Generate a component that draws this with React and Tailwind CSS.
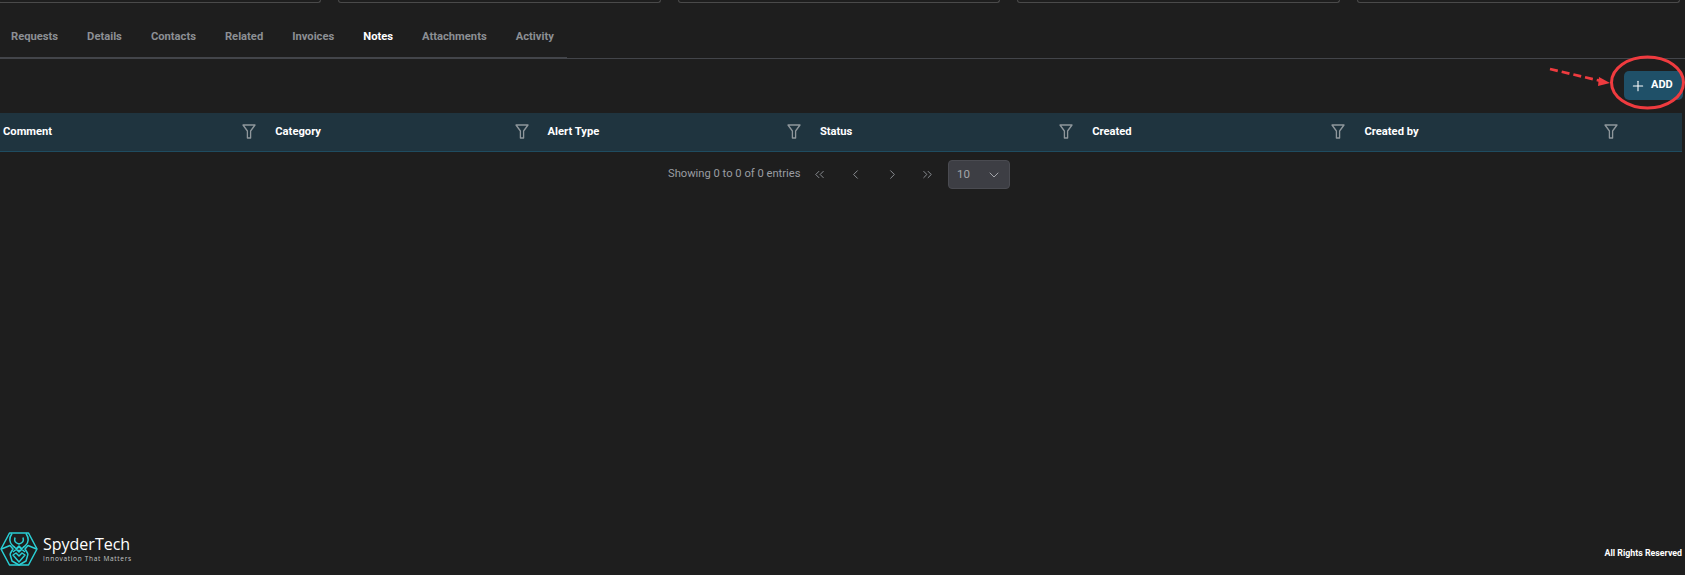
import React from "react";
import { ChevronsLeft, ChevronLeft, ChevronRight, ChevronsRight, ChevronDown, Plus } from "lucide-react";

const tabs = ["Requests", "Details", "Contacts", "Related", "Invoices", "Notes", "Attachments", "Activity"];
const cols = ["Comment", "Category", "Alert Type", "Status", "Created", "Created by"];

function Funnel() {
  return (
    <svg width="14" height="15" viewBox="0 0 14 15" fill="none" stroke="#8f979c" strokeWidth="1.3" strokeLinejoin="round">
      <path d="M1 1h12L8.6 7v7H5.4V7z" />
    </svg>
  );
}

function Logo() {
  return (
    <svg width="38" height="34" viewBox="0 0 38 34" fill="none" stroke="#2ad0d6" strokeWidth="1.5" strokeLinejoin="round">
      <path d="M9.5 1h19L37 17l-8.500 16h-19L1 17z" />
      <path d="M12 1.500C9 6 9 10 12.500 13.500L15 15.500M26 1.500C29 6 29 10 25.500 13.500L23 15.500" />
      <path d="M15 5.500C14 9 15 11 19 12C23 11 24 9 23 5.500" />
      <path d="M1.500 17L10 13.500L13 17L10 22M36.500 17L28 13.500L25 17L28 22" />
      <path d="M13 14l6 5 6-5M13 20l6-5 6 5M16 17l3 3 3-3M16 17l3-3 3 3" />
      <path d="M10 22l2 7 7 4 7-4 2-7M13 23l6 7 6-7-3-2-3 3-3-3z" />
    </svg>
  );
}

export default function App() {
  return (
    <div className="h-[575px] w-[1685px] overflow-hidden bg-[#1e1e1e] flex flex-col relative font-['Roboto',sans-serif]">
      <div className="flex gap-[17px] pr-[5px] ml-[-2px] h-[3px] shrink-0">
        {[0, 1, 2, 3, 4].map((i) => (
          <div key={i} className="flex-1 h-[3px] border border-t-0 border-[#4a4a4a] rounded-b-[3px]" />
        ))}
      </div>

      <div className="h-[56px] shrink-0 border-b border-[#43454a] flex">
        <div className="flex h-[56px] w-[567px] border-b-2 border-[#43454a] pl-[11px] gap-[29px] items-start pt-[27px]">
          {tabs.map((t) => (
            <span
              key={t}
              className={`text-[11.2px] leading-[14px] font-bold ${t === "Notes" ? "text-white" : "text-[#8c8f94]"}`}
            >
              {t}
            </span>
          ))}
        </div>
      </div>

      <div className="flex justify-end pt-[12px] pr-[2px] h-[54px] shrink-0">
        <button className="w-[59px] h-[29px] rounded-[5px] bg-[#1f5068] text-white flex items-center pl-[6px] gap-[5px] text-[11px] font-bold">
          <Plus size={16} strokeWidth={1.6} />
          ADD
        </button>
      </div>

      <div className="h-[39px] mr-[3px] shrink-0 bg-[#1f343f] border-b border-[#1f4c60] grid grid-cols-[repeat(6,272.3px)] items-center">
        {cols.map((c) => (
          <div key={c} className="flex items-center justify-between pl-[3px] pr-[16px]">
            <span className="text-white text-[11.2px] font-bold">{c}</span>
            <Funnel />
          </div>
        ))}
      </div>

      <div className="flex items-center h-[29px] mt-[8px] shrink-0 pl-[668px] text-[#8f9297]">
        <span className="text-[11.2px] w-[133px] whitespace-nowrap text-[#9a9da2]">Showing 0 to 0 of 0 entries</span>
        <div className="w-[14px] ml-[11px]"><ChevronsLeft size={15} strokeWidth={1.5} /></div>
        <div className="w-[14px] ml-[22px]"><ChevronLeft size={15} strokeWidth={1.5} /></div>
        <div className="w-[14px] ml-[23px]"><ChevronRight size={15} strokeWidth={1.5} /></div>
        <div className="w-[14px] ml-[21px]"><ChevronsRight size={15} strokeWidth={1.5} /></div>
        <div className="ml-[14px] w-[62px] h-[29px] rounded-[4px] bg-[#3d3e44] border border-[#4a4b51] flex items-center justify-between pl-[8px] pr-[7px] text-[11.5px] text-[#a3a5aa]">
          <span>10</span>
          <ChevronDown size={16} strokeWidth={1.5} />
        </div>
      </div>

      <div className="mt-auto flex items-end justify-between pb-[9px] pr-[3px]">
        <div className="flex items-center gap-[5px]">
          <Logo />
          <div className="flex flex-col">
            <span className="text-white text-[16px] leading-[19px] font-['Open_Sans',sans-serif]">SpyderTech</span>
            <span className="text-[#c4c6c8] text-[6.5px] leading-[10px] tracking-[0.7px] font-['Open_Sans',sans-serif]">Innovation That Matters</span>
          </div>
        </div>
        <span className="text-white text-[8.8px] font-bold leading-[12px] mb-[7px]">All Rights Reserved</span>
      </div>

      <svg className="absolute left-0 top-0 pointer-events-none" width="1685" height="575" fill="none">
        <ellipse cx="1647.5" cy="82.500" rx="36" ry="25.500" stroke="#ef3b3f" strokeWidth="3" />
        <path d="M1550 69L1601 81" stroke="#ef3b3f" strokeWidth="2.800" strokeDasharray="8 4" />
        <path d="M1610 83l-11-6-1 9z" fill="#ef3b3f" />
      </svg>
    </div>
  );
}
